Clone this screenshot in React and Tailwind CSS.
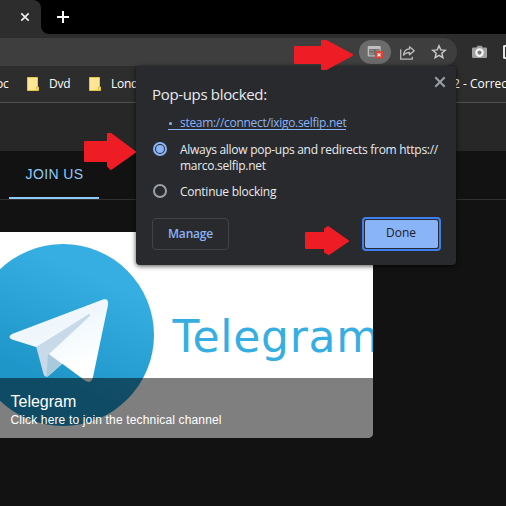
import React from 'react';

function Arrow({ className, points, viewBox }) {
  return (
    <svg className={className} viewBox={viewBox} aria-hidden="true">
      <polygon points={points} fill="#ee1c24" stroke="#ee1c24" strokeWidth="2" strokeLinejoin="round" />
    </svg>
  );
}

function Folder() {
  return (
    <svg className="h-[14px] w-[12px] shrink-0" viewBox="0 0 12 14">
      <path d="M.5 .5h10v9.5h1v3.5H.5z" fill="#ffe694" stroke="#e9c04b" />
      <path d="M9.500 13v-3h1.500" fill="none" stroke="#e9b93a" />
    </svg>
  );
}

function TabStrip() {
  return (
    <div className="flex h-[34px] bg-black">
      <div className="relative flex w-[41px] items-center justify-end rounded-tr-[8px] bg-[#2d2d2d] pr-[11px]">
        <svg className="h-[10px] w-[10px]" viewBox="0 0 10 10">
          <path d="M1.300 1.300l7.400 7.400M8.700 1.300L1.300 8.700" stroke="#eee" strokeWidth="1.700" />
        </svg>
        <svg className="absolute bottom-0 left-[41px] h-[8px] w-[8px]" viewBox="0 0 8 8">
          <path d="M0 0v8h8a8 8 0 0 1-8-8z" fill="#2d2d2d" />
        </svg>
      </div>
      <svg className="ml-[16px] mt-[11px] h-[12px] w-[12px]" viewBox="0 0 12 12">
        <path d="M6 0v12M0 6h12" stroke="#fff" strokeWidth="2" />
      </svg>
    </div>
  );
}

function Toolbar() {
  return (
    <div className="flex h-[32px] items-end bg-[#2d2d2d]">
      <div className="flex h-[28px] w-[457px] items-center rounded-r-full bg-[#3e3e3e]">
        <div className="ml-[359px] flex h-[24px] w-[32px] items-center justify-center rounded-full bg-[#6b6b6b]">
          <svg className="h-[14px] w-[16px]" viewBox="0 0 16 14">
            <path d="M1.700 1h11q1 0 1 1v9.500h-12q-1 0-1-1V2q0-1 1-1z" fill="#c0c0c0" />
            <path d="M2 4h10.500v6.300H2z" fill="#6b6b6b" />
            <path d="M2 4.800h5v1.200H2zM9 4.800h3v1.200H9zM2 7.500h5v2H2z" fill="#8d8d8d" />
            <rect x="8" y="6" width="8" height="7.500" rx="1" fill="#df4236" />
            <path d="M10.500 8.300l3 3m0-3l-3 3" stroke="#fff" strokeWidth="1.200" />
          </svg>
        </div>
        <svg className="ml-[9px] h-[15px] w-[16px]" viewBox="0 0 16 15">
          <path d="M.7 4.300v9.800h11.600v-2.300" fill="none" stroke="#b8b8b8" strokeWidth="1.300" />
          <path d="M9.500 1.800L14.200 5.800l-4.700 4V7.500c-2.800 0-4.500.8-6 2.600.3-3.500 2.200-5.900 6-6.200z" fill="none" stroke="#c0c0c0" strokeWidth="1.300" strokeLinejoin="round" />
        </svg>
        <svg className="ml-[15px] h-[16px] w-[16px]" viewBox="0 0 16 16">
          <path d="M8 1.800l1.750 4.100 4.450.4-3.370 2.950 1 4.350L8 11.300 4.170 13.600l1-4.350L1.800 6.300l4.450-.4z" fill="none" stroke="#c6c6c6" strokeWidth="1.500" />
        </svg>
      </div>
      <svg className="mb-[7px] ml-[15px] h-[14px] w-[15px]" viewBox="0 0 15 14">
        <path d="M1.500 2.500h3L5.600.8h4l1.100 1.700h3q1.300 0 1.300 1.300v8q0 1.300-1.300 1.300H1.500Q0 13.100 0 11.800v-8q0-1.300 1.500-1.300z" fill="#a1a1a1" />
        <circle cx="7.500" cy="7.600" r="3.200" fill="#7b7b7b" stroke="#f4f4f4" strokeWidth="2.200" />
      </svg>
      <div className="mb-[7px] ml-[16px] h-[14px] w-[3px] rounded-l-[2px] border-2 border-r-0 border-[#e4e4e4]" />
    </div>
  );
}

function Bookmarks() {
  return (
    <div className="flex h-[37px] items-center overflow-hidden border-b border-[#505050] bg-[#2d2d2d] font-['Open_Sans',sans-serif] text-[12px] text-white">
      <div className="flex w-full items-center whitespace-nowrap">
        <span className="-ml-[4px] w-[31px] shrink-0 tracking-[-0.2px]">oc</span>
        <Folder />
        <span className="ml-[10px] w-[40px] shrink-0 tracking-[-0.2px]">Dvd</span>
        <Folder />
        <span className="ml-[10px] w-[342px] shrink-0 tracking-[-0.3px]">London</span>
        <span>2 - Correct</span>
      </div>
    </div>
  );
}

function TelegramCard() {
  return (
    <div className="relative h-[206px] w-[373px] overflow-hidden rounded-br-[5px] bg-white">
      <svg className="h-[206px] w-[373px]" viewBox="0 232 373 206">
        <defs>
          <linearGradient id="disc" x1="0.67" y1="0.17" x2="0.42" y2="0.75">
            <stop stopColor="#37aee2" />
            <stop offset="1" stopColor="#1e96c8" />
          </linearGradient>
          <linearGradient id="wing" x1="0.5" y1="0.3" x2="0.75" y2="0.8">
            <stop stopColor="#eff7fc" />
            <stop offset="1" stopColor="#fff" />
          </linearGradient>
        </defs>
        <circle cx="63" cy="335" r="91" fill="url(#disc)" />
        <path d="M36 346l7.500 28q1 3.600 4.500 2.500L62 364l34-40v-14z" fill="#c8daea" />
        <path d="M48 354l-1.500 22.500q1.500 0 4-2.500L62 364z" fill="#a9c9dd" />
        <path d="M36 347l-24-7.500q-5-2.300 0-5.500L103 299.500q6-1.800 5 5.500L93 377q-2 7.500-8 3.500L49 354l41-38q1.500-2.500-1.500-1.500z" fill="url(#wing)" />
        <text x="172.500" y="352" fontFamily="'DejaVu Sans', sans-serif" fontSize="44" letterSpacing="0.7" fill="#37aee2">Telegram</text>
      </svg>
      <div className="absolute inset-x-0 bottom-0 h-[60px] bg-black/50 pl-[10.500px] pt-[14px] font-['Liberation_Sans',Arial,sans-serif] text-white">
        <div className="text-[16px] leading-[19px]">Telegram</div>
        <div className="text-[12px] leading-[18px] tracking-[0.16px]">Click here to join the technical channel</div>
      </div>
    </div>
  );
}

function Popup() {
  return (
    <section className="absolute left-[136px] top-[66px] h-[199px] w-[320px] rounded-[4px] bg-[#292a2d] px-4 font-['Open_Sans',sans-serif] text-[12px] leading-4 text-[#e8eaed] shadow-[0_1px_5px_rgba(0,0,0,0.7)]">
      <div className="flex h-[49px] justify-between">
        <h1 className="whitespace-nowrap pt-[18px] text-[15px] leading-5 tracking-[-0.33px]">Pop-ups blocked:</h1>
        <svg className="-mr-[6px] mt-[10px] h-[12px] w-[12px]" viewBox="0 0 12 12">
          <path d="M1.300 1.300l9.400 9.400m0-9.400l-9.400 9.400" stroke="#9aa0a6" strokeWidth="2" />
        </svg>
      </div>
      <div className="ml-4 mt-[1px] flex w-[178px] whitespace-pre border-b border-[#8ab4f8] leading-[13px] text-[#8ab4f8]">
        <span className="flex w-[12px] shrink-0 items-center pl-[1px] pt-[2px]">
          <span className="h-[3px] w-[3px] rounded-full bg-[#8ab4f8]" />
        </span>
        <span className="tracking-[-0.3px]">steam://connect/ixigo.selfip.net</span>
      </div>
      <div className="mt-[12px] flex h-[42px]">
        <span className="ml-[1px] flex h-[14px] w-[14px] shrink-0 items-center justify-center rounded-full border-2 border-[#8ab4f8]">
          <span className="h-[8px] w-[8px] shrink-0 rounded-full bg-[#8ab4f8]" />
        </span>
        <p className="ml-[13px] whitespace-nowrap tracking-[-0.28px]">Always allow pop-ups and redirects from https://<br />marco.selfip.net</p>
      </div>
      <div className="flex h-[34px]">
        <span className="ml-[1px] h-[14px] w-[14px] shrink-0 rounded-full border-2 border-[#9aa0a6]" />
        <p className="ml-[13px] tracking-[-0.26px]">Continue blocking</p>
      </div>
      <div className="flex items-start justify-between">
        <button className="h-[32px] w-[77px] rounded-[4px] border border-[#414347] pb-[1px] font-semibold tracking-[-0.2px] text-[#8ab4f8]">Manage</button>
        <button className="-mr-[1px] -mt-[1px] h-[34px] w-[79px] rounded-[4px] border-2 border-[#3f80ee] p-[1px] text-[#202124]">
          <span className="flex h-full items-center justify-center rounded-[2px] bg-[#8ab4f8] pb-[2px] pr-[1px]">Done</span>
        </button>
      </div>
    </section>
  );
}

export default function App() {
  return (
    <main className="relative h-[506px] w-[506px] overflow-hidden bg-[#121212]">
      <TabStrip />
      <Toolbar />
      <Bookmarks />
      <div className="h-[48px] bg-[#272727]" />
      <nav className="h-[49px] border-b border-[#303030] pl-[9px]">
        <div className="flex h-[48px] w-[90px] items-center justify-center border-b-2 border-[#90caf9] pl-[1px] font-['Liberation_Sans',Arial,sans-serif] text-[14px] tracking-[0.4px] text-[#90caf9]">JOIN US</div>
      </nav>
      <div className="h-[32px]" />
      <TelegramCard />
      <Popup />
      <Arrow className="absolute left-[293px] top-[39px] h-[32px] w-[61px]" viewBox="0 0 61 32" points="2,8 29,8 29,2 33,2 59,16 33,30 29,30 29,24 2,24" />
      <Arrow className="absolute left-[83px] top-[132px] h-[39px] w-[54px]" viewBox="0 0 54 39" points="2,10 25,10 25,2 28,2 52,20 28,37 25,34 25,29 2,29" />
      <Arrow className="absolute left-[304px] top-[225px] h-[31px] w-[46px]" viewBox="0 0 46 31" points="2,8 21,8 21,4 24,2 44,16 25,29 21,27 21,23 2,23" />
    </main>
  );
}
